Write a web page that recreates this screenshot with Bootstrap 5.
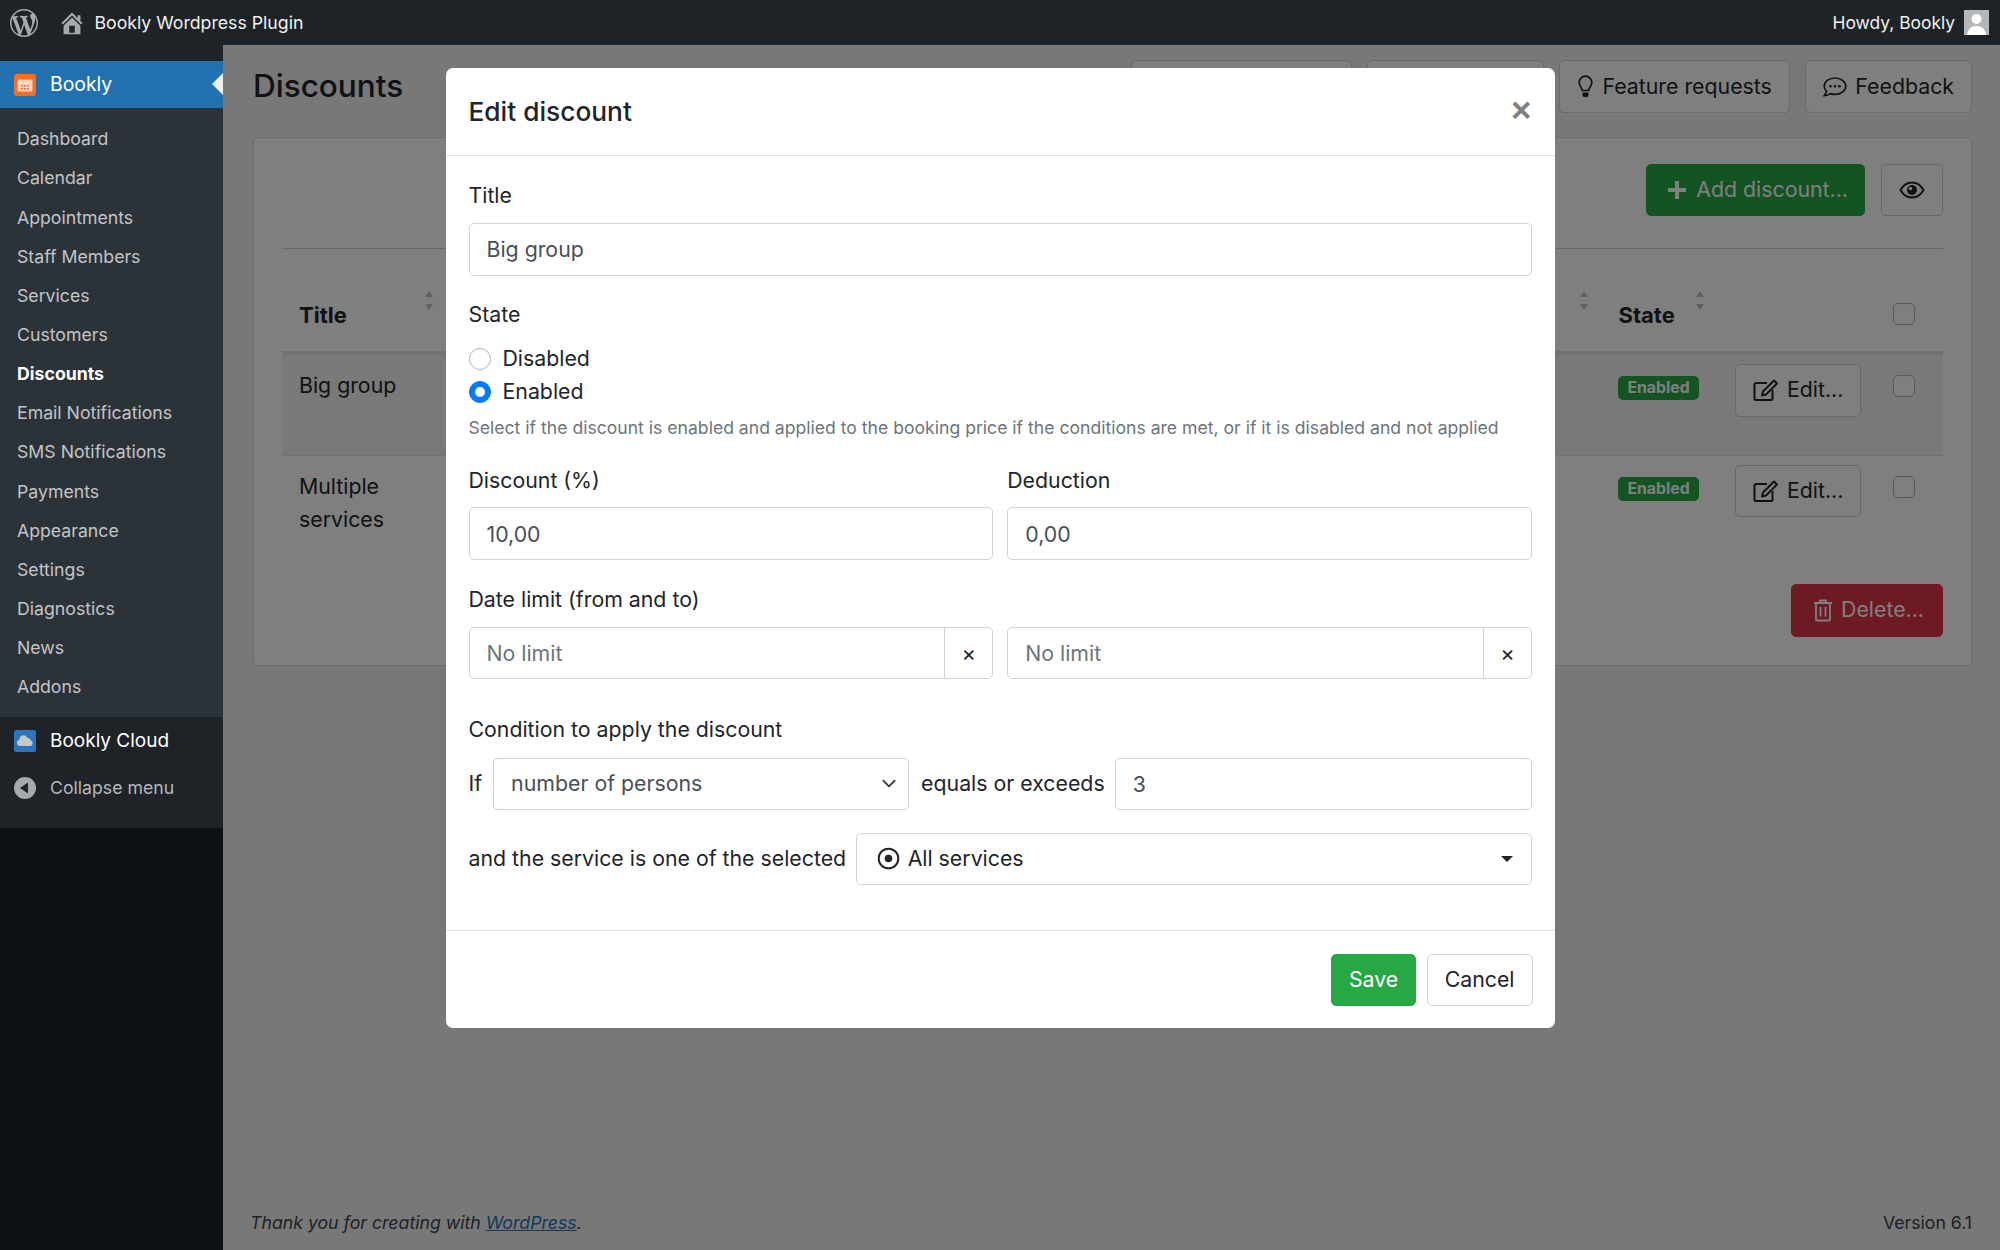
<!DOCTYPE html>
<html lang="en">
<head>
<meta charset="utf-8">
<title>Discounts</title>
<link href="https://cdn.jsdelivr.net/npm/bootstrap@5.3.0/dist/css/bootstrap.min.css" rel="stylesheet">
<script src="https://cdn.jsdelivr.net/npm/bootstrap@5.3.0/dist/js/bootstrap.bundle.min.js"></script>
<style>
:root{--bs-body-font-family:"Inter","Liberation Sans",sans-serif;--bs-body-font-size:21.3px;--bs-body-color:#212529;--bs-body-bg:#fff;--bs-border-radius:5px}
html,body{height:100%}
body{background-color:#f0f0f1}
.wp-shell{height:100vh;width:2000px}
.wp-top{height:45px;background:#1d2327;color:#f0f0f1;font-size:17.7px;position:relative;z-index:1060;padding:0 11px 0 10px}
.wp-top svg{fill:#a7aaad;display:block}
.wp-top-label{margin-top:2px}
.wp-top-howdy{font-size:17.4px}
.wp-top-home{margin-left:20px;margin-right:8.5px}
.wp-avatar{width:25px;height:25px;background:#b4b7ba;margin-left:9px;overflow:hidden}
.wp-body{min-height:0}
.wp-side{width:223px;flex:0 0 223px;background:#0d1114;position:relative;z-index:1060;font-size:17.7px}
.wp-side-gap{height:16px;background:#1d2327}
.wp-cur{height:47px;background:#2271b1;color:#fff;font-size:19.4px;padding-left:14px;gap:14px;position:relative}
.wp-cur::after{content:"";position:absolute;right:0;top:12px;border:11px solid transparent;border-right-color:#f0f0f1;border-left-width:0}
.wp-sub{background:#2c3338;padding:12px 0 9.4px}
.wp-sub .nav-link{color:#c3c4c7;height:39.15px;padding:0 0 0 17px;display:flex;align-items:center}
.wp-sub .nav-link.active{color:#fff;font-weight:700}
.wp-more{background:#1d2327;padding-bottom:17px}
.wp-more-item{height:45.5px;padding-left:14px;gap:14px}
.wp-cloud{color:#fff;font-size:19px;height:49px}
.wp-collapse{color:#b4b9be}
.wp-ico{width:22px;height:22px;flex:none;display:block}
.wp-main{padding:15px 28px 13px 30px;min-width:0}
.bk-title{font-size:31.5px;font-weight:500;line-height:51px;margin:0 0 2px}
.bk-tools{gap:15px}
.bk-btn{--bs-btn-bg:#fff;--bs-btn-border-color:#ced4da;--bs-btn-color:#212529;--bs-btn-font-size:21.3px;--bs-btn-border-radius:5px;--bs-btn-padding-x:17px;--bs-btn-padding-y:0;height:52.5px;display:inline-flex;align-items:center}
.bk-doc{width:221px}
.bk-con{width:177px}
.bk-feat{gap:10px;--bs-btn-padding-x:17.5px}
.bk-fb{gap:8px}
.bk-head{margin-bottom:24px}
.bk-panel{background:#fff;border:1px solid #d6d9dc;border-radius:5px;padding:25.5px 28px 28px}
.bk-panel hr{margin:32px 0 0;opacity:1;color:#ced4da}
.bk-table{table-layout:fixed;width:100%;margin:0;--bs-table-bg:transparent;--bs-table-active-bg:rgba(0,0,0,.05)}
.bk-table thead th{height:104px;border-bottom:4px solid #dee2e6;font-weight:700;font-size:22px;padding:0 16px 19px 17px;position:relative;vertical-align:bottom}
.bk-table tbody tr{height:101px}
.bk-table tbody tr.bk-row1{height:102px}
.bk-table tbody td{vertical-align:top;padding:14px 16px 0 17px;border-bottom:0;line-height:33px}
.bk-table tbody tr:first-child td{border-bottom:1px solid #dee2e6}
.bk-table tbody td.bk-tdbtn{padding:9px 0 0 22px}
.bk-table tbody td.bk-tdchk{padding:20px 0 0 18px;line-height:1}
.bk-table tbody td.bk-tdbadge{padding-top:21px;padding-left:15px;line-height:1}
.bk-sort{position:absolute;right:14px;bottom:41px;height:19px;width:9px}
.bk-sort-first{right:8px}
.bk-sort::before,.bk-sort::after{content:"";position:absolute;left:0;border:4.5px solid transparent}
.bk-sort::before{top:0;border-bottom:6px solid #c0c0c0;border-top:0}
.bk-sort::after{bottom:0;border-top:6px solid #c0c0c0;border-bottom:0}
.form-check-input.bk-box{width:22px;height:22px;margin:0;border-color:#adb5bd;border-radius:5px;display:block}
.bk-table thead th.bk-thchk{padding:0 0 26.5px 18px}
.bk-table thead th.bk-thstate{padding-left:15.500px}
.bk-badge{background:#28a745;color:#fff;font-size:15.8px;font-weight:700;border-radius:5px;padding:0;width:81px;height:24px;display:flex;align-items:center;justify-content:center}
.bk-add{--bs-btn-bg:#28a745;--bs-btn-border-color:#28a745;--bs-btn-color:#fff;--bs-btn-padding-x:19px}
.bk-addmain{gap:9px;padding-left:20px;padding-right:16px}
.bk-del{--bs-btn-bg:#dc3545;--bs-btn-border-color:#dc3545;--bs-btn-color:#fff;height:52.5px;margin-top:28px;padding-left:21px;padding-right:18px}
.wp-foot{font-size:17.7px;color:#3c434a;margin-left:-3px}
.wp-foot a{color:#2271b1}
.edit-dlg{--bs-modal-width:1109px;margin-top:68px!important;margin-bottom:0}
.edit-dlg .modal-content{border-radius:7px;border:0;color:#212529;background:#fff}
.edit-dlg .modal-header{height:87.5px;padding:2px 22px 0 23px;border-bottom:1px solid #dee2e6}
.edit-dlg .modal-title{font-size:26.3px;font-weight:500;line-height:1.2;margin-top:0}
.bk-x{border:0;background:none;padding:0;color:#808080;font-size:35px;font-weight:700;line-height:1;margin-top:-5px;margin-right:1px;font-family:"Liberation Sans",sans-serif}
.edit-dlg .modal-body{padding:24px 22.5px 44.5px 23px}
.bk-group{margin-bottom:25px}
.bk-group-first{margin-bottom:23px}
.bk-group-twin{margin-bottom:24.2px}
.bk-group-wide{margin-bottom:35px}
.edit-dlg .form-label{margin-bottom:12.2px;display:block;line-height:30.6px}
.edit-dlg .form-label.bk-lab-title{margin-bottom:13px}
.edit-dlg .form-label.bk-lab-state{margin-bottom:13px}
.edit-dlg .form-label.bk-lab-cond{margin-bottom:12.5px}
.edit-dlg .form-control,.edit-dlg .form-select{height:52.5px;font-size:21.3px;padding:0 17px;color:#495057;border-color:#ced4da;border-radius:5px}
.edit-dlg .form-control::placeholder{color:#6c757d}
.bk-radio{display:flex;align-items:center;gap:12px;height:33px;min-height:0;padding:0;margin:0}
.bk-radio .form-check-input{width:22px;height:22px;margin:0;float:none;flex:none;border-color:#adb5bd}
.bk-radio .form-check-input:checked{background-color:#007bff;border-color:#007bff}
.bk-help{font-size:17.6px;color:#6c757d;line-height:24px;margin-top:7.5px}
.bk-twin{--bs-gutter-x:14px}
.bk-clear{width:49px;padding:0;justify-content:center;background:#fff;color:#212529;border-color:#ced4da;font-size:22px;border-top-right-radius:5px!important;border-bottom-right-radius:5px!important}
.bk-cond{gap:11px}
.bk-cond+.bk-cond{margin-top:22.5px}
.edit-dlg .bk-sel{flex:0 0 416px;width:416px;background-position:right 9px center;background-size:20px 15px}
.bk-eqtext{margin-left:1px;margin-right:-1px}
.bk-drop{height:52.5px;border:1px solid #ced4da;border-radius:5px;font-size:21.3px;padding:0 18px 0 20px;color:#212529;background:#fff;display:flex;align-items:center;gap:8px;margin-left:-1.5px}
.bk-drop::after{margin-left:auto}
.edit-dlg .modal-footer{padding:2px 22px 0;height:98px;gap:10.5px;border-top:1px solid #dee2e6;flex-wrap:nowrap}
.edit-dlg .modal-footer>*{margin:0}
.bk-save,.bk-cancel{height:52.5px}
.bk-save{--bs-btn-padding-x:17px}
</style>
</head>
<body class="overflow-hidden">
<div class="wp-shell d-flex flex-column">
  <header class="wp-top d-flex align-items-center">
    <svg width="28" height="28" viewBox="0 0 20 20"><path d="M20 10c0-5.51-4.49-10-10-10C4.48 0 0 4.49 0 10c0 5.52 4.48 10 10 10 5.51 0 10-4.48 10-10zM7.78 15.37L4.37 6.22c.55-.02 1.17-.08 1.17-.08.5-.06.44-1.13-.06-1.11 0 0-1.45.11-2.37.11-.18 0-.37 0-.58-.01C4.12 2.69 6.87 1.11 10 1.11c2.33 0 4.45.87 6.05 2.34-.68-.11-1.65.39-1.65 1.58 0 .74.45 1.36.9 2.1.35.61.55 1.36.55 2.46 0 1.49-1.4 5-1.4 5l-3.03-8.37c.54-.02.82-.17.82-.17.5-.05.44-1.25-.06-1.22 0 0-1.44.12-2.38.12-.87 0-2.33-.12-2.33-.12-.5-.03-.56 1.2-.06 1.22l.92.08 1.26 3.41zM17.41 10c.24-.64.74-1.87.43-4.25.7 1.29 1.05 2.71 1.05 4.25 0 3.29-1.73 6.24-4.4 7.78.97-2.59 1.94-5.2 2.92-7.78zM6.1 18.09C3.12 16.65 1.11 13.53 1.11 10c0-1.3.23-2.48.72-3.59C3.25 10.3 4.67 14.2 6.1 18.09zm4.03-6.63l2.58 6.98c-.86.29-1.76.45-2.71.45-.79 0-1.57-.11-2.29-.33.81-2.38 1.62-4.74 2.42-7.1z"/></svg>
    <svg class="wp-top-home" width="28" height="28" viewBox="0 0 20 20"><path d="M16 8.5l1.53 1.53-1.06 1.06L10 4.62l-6.47 6.47-1.06-1.06L10 2.5l4 4v-2h2v4zm-6-2.46l6 5.99V18H4v-5.97zM12 17v-5H8v5h4z"/></svg>
    <span class="wp-top-label">Bookly Wordpress Plugin</span>
    <span class="wp-top-label wp-top-howdy ms-auto">Howdy, Bookly</span>
    <span class="wp-avatar d-block"><svg width="25" height="25" viewBox="0 0 25 25" style="fill:#fff"><circle cx="12.5" cy="9" r="5"/><path d="M3 25c1-7 5-9 9.500-9s8.500 2 9.500 9z"/></svg></span>
  </header>
  <div class="wp-body d-flex flex-grow-1">
    <aside class="wp-side">
      <div class="wp-side-gap"></div>
      <div class="wp-cur d-flex align-items-center">
        <svg class="wp-ico" viewBox="0 0 22 22"><rect width="22" height="22" rx="3" fill="#f56e28"/><rect x="3.500" y="5.500" width="15" height="12" rx="1.500" fill="#fbd7c4"/><path d="M7 11h2v1.500H7zm3 0h2v1.500h-2zm3 0h2v1.500h-2zm-6 3h2v1.500H7zm3 0h2v1.500h-2zm3 0h2v1.500h-2z" fill="#f56e28"/></svg>
        <span>Bookly</span>
      </div>
      <nav class="wp-sub nav flex-column">
        <a class="nav-link" href="#">Dashboard</a>
        <a class="nav-link" href="#">Calendar</a>
        <a class="nav-link" href="#">Appointments</a>
        <a class="nav-link" href="#">Staff Members</a>
        <a class="nav-link" href="#">Services</a>
        <a class="nav-link" href="#">Customers</a>
        <a class="nav-link active" href="#">Discounts</a>
        <a class="nav-link" href="#">Email Notifications</a>
        <a class="nav-link" href="#">SMS Notifications</a>
        <a class="nav-link" href="#">Payments</a>
        <a class="nav-link" href="#">Appearance</a>
        <a class="nav-link" href="#">Settings</a>
        <a class="nav-link" href="#">Diagnostics</a>
        <a class="nav-link" href="#">News</a>
        <a class="nav-link" href="#">Addons</a>
      </nav>
      <div class="wp-more">
        <div class="wp-more-item wp-cloud d-flex align-items-center">
          <svg class="wp-ico" viewBox="0 0 22 22"><rect width="22" height="22" rx="2" fill="#2e74ba"/><path d="M6 16a3.200 3.200 0 0 1-.6-6.300A4.200 4.200 0 0 1 13.500 8a3 3 0 0 1 3.400 2.600A2.800 2.800 0 0 1 16.200 16z" fill="#c3c9cf"/></svg>
          <span>Bookly Cloud</span>
        </div>
        <div class="wp-more-item wp-collapse d-flex align-items-center">
          <svg class="wp-ico" viewBox="0 0 22 22"><circle cx="11" cy="11" r="11" fill="#a7aaad"/><path d="M14 5.500v11L6 11z" fill="#1d2327"/></svg>
          <span>Collapse menu</span>
        </div>
      </div>
    </aside>
    <main class="wp-main d-flex flex-column flex-grow-1">
      <div class="bk-head d-flex align-items-center">
        <h1 class="bk-title me-auto">Discounts</h1>
        <div class="bk-tools d-flex">
          <a class="btn bk-btn bk-doc" href="#" aria-label="Documentation"></a>
          <a class="btn bk-btn bk-con" href="#" aria-label="Contact us"></a>
          <a class="btn bk-btn bk-feat" href="#">
            <svg width="15" height="23" viewBox="0 0 15 23"><path d="M7.500 1.200a6.300 6.300 0 0 0-6.300 6.300c0 3.300 2.500 4.700 3.200 8h6.200c.7-3.300 3.200-4.700 3.200-8a6.300 6.300 0 0 0-6.300-6.300z" fill="none" stroke="#212529" stroke-width="1.700"/><path d="M4.500 17.500h6V20a2 2 0 0 1-2 2h-2a2 2 0 0 1-2-2z" fill="#212529"/></svg>
            Feature requests</a>
          <a class="btn bk-btn bk-fb" href="#">
            <svg width="24" height="20" viewBox="0 0 24 20"><path d="M12 1C6 1 1.200 4.700 1.200 9.300c0 1.900.9 3.700 2.400 5.100-.5 1.500-1.500 3-2.400 4.300 2.400-.1 4.500-1 6-2.100 1.500.5 3.100.8 4.800.8 6 0 10.800-3.700 10.800-8.100S18 1 12 1z" fill="none" stroke="#212529" stroke-width="1.700"/><circle cx="7.500" cy="9.300" r="1.300" fill="#212529"/><circle cx="12" cy="9.300" r="1.300" fill="#212529"/><circle cx="16.500" cy="9.300" r="1.300" fill="#212529"/></svg>
            Feedback</a>
        </div>
      </div>
      <section class="bk-panel">
        <div class="d-flex justify-content-end gap-3">
          <button class="btn bk-btn bk-add bk-addmain" type="button">
            <svg width="20" height="20" viewBox="0 0 20 20"><path d="M8 1h4v7h7v4h-7v7H8v-7H1V8h7z" fill="#fff"/></svg>
            Add discount...</button>
          <button class="btn bk-btn" type="button" aria-label="Columns">
            <svg width="26" height="18" viewBox="0 0 26 18"><path d="M1.500 9C4 4.500 8 1.500 13 1.500S22 4.500 24.500 9C22 13.500 18 16.500 13 16.500S4 13.500 1.500 9z" fill="none" stroke="#212529" stroke-width="2"/><circle cx="13" cy="9" r="5" fill="#212529"/><circle cx="11.500" cy="7.500" r="1.700" fill="#fff"/></svg>
          </button>
        </div>
        <hr>
        <table class="table bk-table">
          <colgroup><col style="width:160px"><col><col style="width:240px"><col style="width:110px"><col style="width:162px"><col style="width:68px"></colgroup>
          <thead>
            <tr>
              <th>Title<span class="bk-sort bk-sort-first"></span></th>
              <th></th>
              <th><span class="bk-sort"></span></th>
              <th class="bk-thstate">State<span class="bk-sort bk-sort-first"></span></th>
              <th></th>
              <th class="bk-thchk"><input class="form-check-input bk-box" type="checkbox" aria-label="All"></th>
            </tr>
          </thead>
          <tbody>
            <tr class="table-active bk-row1">
              <td>Big group</td><td></td><td></td>
              <td class="bk-tdbadge"><span class="badge bk-badge">Enabled</span></td>
              <td class="bk-tdbtn"><button class="btn bk-btn gap-2" type="button">
                <svg width="26" height="22" viewBox="0 0 26 22"><path d="M14 4H3a1.500 1.500 0 0 0-1.500 1.500v14A1.500 1.500 0 0 0 3 21h15a1.500 1.500 0 0 0 1.500-1.500V11" fill="none" stroke="#212529" stroke-width="2"/><path d="M21 1.500l3 3L13 15.500l-4 1 1-4z" fill="none" stroke="#212529" stroke-width="2" stroke-linejoin="round"/></svg>Edit...</button></td>
              <td class="bk-tdchk"><input class="form-check-input bk-box" type="checkbox" aria-label="Big group"></td>
            </tr>
            <tr>
              <td>Multiple services</td><td></td><td></td>
              <td class="bk-tdbadge"><span class="badge bk-badge">Enabled</span></td>
              <td class="bk-tdbtn"><button class="btn bk-btn gap-2" type="button">
                <svg width="26" height="22" viewBox="0 0 26 22"><path d="M14 4H3a1.500 1.500 0 0 0-1.500 1.500v14A1.500 1.500 0 0 0 3 21h15a1.500 1.500 0 0 0 1.500-1.500V11" fill="none" stroke="#212529" stroke-width="2"/><path d="M21 1.500l3 3L13 15.500l-4 1 1-4z" fill="none" stroke="#212529" stroke-width="2" stroke-linejoin="round"/></svg>Edit...</button></td>
              <td class="bk-tdchk"><input class="form-check-input bk-box" type="checkbox" aria-label="Multiple services"></td>
            </tr>
          </tbody>
        </table>
        <div class="d-flex justify-content-end">
          <button class="btn bk-btn bk-del gap-2" type="button">
            <svg width="20" height="24" viewBox="0 0 20 24"><path d="M1 5h18M7 5V2.500h6V5M3 5v16.500a1 1 0 0 0 1 1h12a1 1 0 0 0 1-1V5M7.500 9v9.500M12.500 9v9.500" fill="none" stroke="#fff" stroke-width="1.800"/></svg>
            Delete...</button>
        </div>
      </section>
      <footer class="wp-foot mt-auto d-flex justify-content-between">
        <span class="fst-italic">Thank you for creating with <a href="#">WordPress</a>.</span>
        <span>Version 6.1</span>
      </footer>
    </main>
  </div>
</div>

<div class="modal-backdrop show"></div>
<div class="modal d-block" tabindex="-1">
  <div class="modal-dialog edit-dlg">
    <div class="modal-content">
      <div class="modal-header">
        <h5 class="modal-title">Edit discount</h5>
        <button class="bk-x ms-auto" type="button" aria-label="Close">×</button>
      </div>
      <div class="modal-body">
        <div class="bk-group-first">
          <label class="form-label bk-lab-title" for="f-title">Title</label>
          <input class="form-control" id="f-title" value="Big group">
        </div>
        <div class="bk-group">
          <div class="form-label bk-lab-state">State</div>
          <div class="form-check bk-radio"><input class="form-check-input" type="radio" name="st" id="st0"><label class="form-check-label" for="st0">Disabled</label></div>
          <div class="form-check bk-radio"><input class="form-check-input" type="radio" name="st" id="st1" checked><label class="form-check-label" for="st1">Enabled</label></div>
          <div class="bk-help">Select if the discount is enabled and applied to the booking price if the conditions are met, or if it is disabled and not applied</div>
        </div>
        <div class="row bk-twin bk-group-twin">
          <div class="col-6">
            <label class="form-label" for="f-d">Discount (%)</label>
            <input class="form-control" id="f-d" value="10,00">
          </div>
          <div class="col-6">
            <label class="form-label" for="f-e">Deduction</label>
            <input class="form-control" id="f-e" value="0,00">
          </div>
        </div>
        <div class="bk-group-wide">
          <div class="form-label">Date limit (from and to)</div>
          <div class="row bk-twin">
            <div class="col-6"><div class="input-group"><input class="form-control" placeholder="No limit" aria-label="From"><span class="input-group-text bk-clear">×</span></div></div>
            <div class="col-6"><div class="input-group"><input class="form-control" placeholder="No limit" aria-label="To"><span class="input-group-text bk-clear">×</span></div></div>
          </div>
        </div>
        <div class="form-label bk-lab-cond">Condition to apply the discount</div>
        <div class="bk-cond d-flex align-items-center">
          <span>If</span>
          <select class="form-select bk-sel" aria-label="Condition"><option>number of persons</option></select>
          <span class="text-nowrap bk-eqtext">equals or exceeds</span>
          <input class="form-control flex-grow-1" value="3" aria-label="Threshold">
        </div>
        <div class="bk-cond d-flex align-items-center">
          <span class="text-nowrap">and the service is one of the selected</span>
          <button class="bk-drop dropdown-toggle flex-grow-1" type="button">
            <svg width="23" height="23" viewBox="0 0 23 23"><circle cx="11.500" cy="11.500" r="9.800" fill="none" stroke="#212529" stroke-width="2"/><circle cx="11.500" cy="11.500" r="3.800" fill="#212529"/></svg>
            All services</button>
        </div>
      </div>
      <div class="modal-footer">
        <button class="btn bk-btn bk-add bk-save" type="button">Save</button>
        <button class="btn bk-btn bk-cancel" type="button">Cancel</button>
      </div>
    </div>
  </div>
</div>
</body>
</html>
